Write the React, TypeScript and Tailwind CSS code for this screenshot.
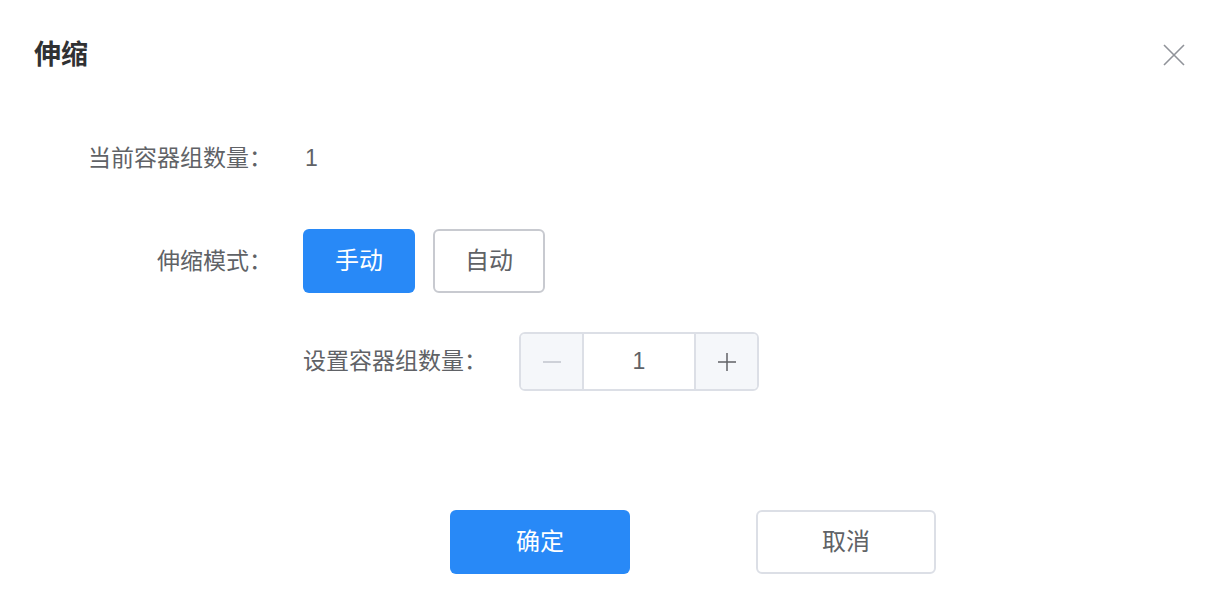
import React, { useState } from "react";

const font = "font-['Liberation_Sans','Noto_Sans_CJK_SC',sans-serif]";

export default function App() {
  const [mode, setMode] = useState<"manual" | "auto">("manual");
  const [count, setCount] = useState(1);

  return (
    <div className={`w-[1222px] h-[603px] bg-white ${font} text-[#606266] flex flex-col`}>
      {/* header */}
      <div className="flex items-center justify-between pl-[34px] pr-[37px] pt-[40px] h-[70px]">
        <span className="text-[27px] leading-[30px] font-bold text-[#303133]">伸缩</span>
        <button className="w-[22px] h-[22px] flex items-center justify-center">
          <svg width="22" height="22" viewBox="0 0 22 22">
            <path d="M1 1L21 21M21 1L1 21" stroke="#909399" strokeWidth="1.6" />
          </svg>
        </button>
      </div>

      {/* current count */}
      <div className="flex items-center h-[40px] mt-[68px]">
        <div className="w-[272px] text-right text-[23px]">当前容器组数量：</div>
        <div className="pl-[33px] text-[23px]">1</div>
      </div>

      {/* mode */}
      <div className="flex items-center mt-[51px]">
        <div className="w-[272px] text-right text-[23px]">伸缩模式：</div>
        <div className="flex gap-[18px] pl-[31px]">
          <button
            onClick={() => setMode("manual")}
            className={`w-[112px] h-[64px] rounded-[6px] text-[24px] ${
              mode === "manual" ? "bg-[#2889f7] text-white" : "border-2 border-[#c8cad0] bg-white text-[#606266]"
            }`}
          >
            手动
          </button>
          <button
            onClick={() => setMode("auto")}
            className={`w-[112px] h-[64px] rounded-[6px] text-[24px] ${
              mode === "auto" ? "bg-[#2889f7] text-white" : "border-2 border-[#c8cad0] bg-white text-[#606266]"
            }`}
          >
            自动
          </button>
        </div>
      </div>

      {/* count input */}
      <div className="flex items-center mt-[39px] pl-[303px]">
        <div className="text-[23px] w-[216px]">设置容器组数量：</div>
        <div className="flex w-[240px] h-[59px] border-2 border-[#dcdfe6] rounded-[6px] overflow-hidden">
          <button
            onClick={() => setCount(Math.max(1, count - 1))}
            className="w-[63px] bg-[#f5f7fa] border-r-2 border-[#dcdfe6] flex items-center justify-center"
          >
            <svg width="20" height="20" viewBox="0 0 20 20">
              <path d="M1 10H19" stroke="#c0c4cc" strokeWidth="1.5" />
            </svg>
          </button>
          <div className="flex-1 flex items-center justify-center text-[23px] text-[#606266]">{count}</div>
          <button
            onClick={() => setCount(count + 1)}
            className="w-[63px] bg-[#f5f7fa] border-l-2 border-[#dcdfe6] flex items-center justify-center"
          >
            <svg width="20" height="20" viewBox="0 0 20 20">
              <path d="M1 10H19M10 1V19" stroke="#606266" strokeWidth="1.5" />
            </svg>
          </button>
        </div>
      </div>

      {/* footer */}
      <div className="flex mt-[119px] pl-[450px] gap-[126px]">
        <button className="w-[180px] h-[64px] rounded-[6px] bg-[#2889f7] text-white text-[24px]">确定</button>
        <button className="w-[180px] h-[64px] rounded-[6px] border-2 border-[#dcdfe6] bg-white text-[24px] text-[#606266]">
          取消
        </button>
      </div>
    </div>
  );
}
